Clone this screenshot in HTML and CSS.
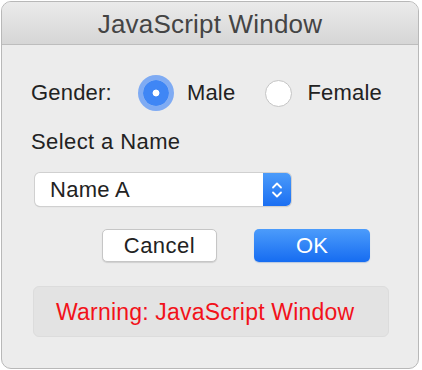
FILE: index.html
```html
<!DOCTYPE html>
<html lang="en">
<head>
    <meta charset="UTF-8">
    <meta name="viewport" content="width=device-width, initial-scale=1.0">
    <title>JavaScript Window</title>
    <link rel="stylesheet" href="styles.css">
</head>
<body>
    <div class="window">
        <div class="titlebar">JavaScript Window</div>

        <div class="content">
            <div class="gender-row">
                <span class="label">Gender:</span>
                <label class="radio-option">
                    <span class="radio checked"></span>
                    <span>Male</span>
                </label>
                <label class="radio-option">
                    <span class="radio"></span>
                    <span>Female</span>
                </label>
            </div>

            <div class="label select-label">Select a Name</div>

            <div class="select">
                <span class="select-value">Name A</span>
                <span class="select-arrows">
                    <svg width="12" height="20" viewBox="0 0 12 20">
                        <path d="M2 7.5 L6 3.5 L10 7.5" fill="none" stroke="#fff" stroke-width="1.8" stroke-linecap="round" stroke-linejoin="round"/>
                        <path d="M2 12.5 L6 16.5 L10 12.5" fill="none" stroke="#fff" stroke-width="1.8" stroke-linecap="round" stroke-linejoin="round"/>
                    </svg>
                </span>
            </div>

            <div class="buttons">
                <button class="btn btn-cancel">Cancel</button>
                <button class="btn btn-ok">OK</button>
            </div>

            <div class="warning">Warning: JavaScript Window</div>
        </div>
    </div>
</body>
</html>
```

FILE: styles.css
```css
html, body {
    margin: 0;
    background: #ffffff;
}
body {
    padding: 1px;
    font-family: "Liberation Sans", Arial, sans-serif;
    color: #222;
}
.window {
    width: 416px;
    height: 366px;
    border: 1px solid #b8b8b8;
    border-radius: 10px;
    background: #ececec;
    overflow: hidden;
}
.titlebar {
    height: 42px;
    line-height: 44px;
    text-align: center;
    font-size: 26px;
    letter-spacing: 0.2px;
    color: #444;
    background: linear-gradient(#ebebeb, #d6d6d6);
    border-bottom: 1px solid #bdbdbd;
}
.content {
    padding: 30px 0 0 29px;
}
.label {
    font-size: 22px;
    line-height: 26px;
    letter-spacing: 0.2px;
}
.gender-row {
    display: flex;
    align-items: center;
    height: 36px;
    font-size: 22px;
    letter-spacing: 0.2px;
}
.radio-option {
    display: flex;
    align-items: center;
    gap: 15px;
}
.radio-option:first-of-type {
    margin-left: 31px;
    margin-right: 30px;
}
.radio {
    box-sizing: border-box;
    width: 27px;
    height: 27px;
    border-radius: 50%;
    background: #fff;
    border: 1px solid #c4c4c4;
}
.radio.checked {
    width: 26px;
    height: 26px;
    border: none;
    background: radial-gradient(circle, #fff 0, #fff 3px, #3f86f5 3.8px);
    box-shadow: 0 0 0 5px #7fabf3;
    margin-right: 3px;
}
.select-label {
    margin-top: 18px;
    letter-spacing: 0.4px;
}
.select {
    display: flex;
    width: 256px;
    height: 33px;
    margin-top: 18px;
    margin-left: 4px;
    background: #fff;
    border-radius: 5px;
    box-shadow: 0 0 0 1px #d0d0d0, 0 1px 1px #bcbcbc;
    overflow: hidden;
}
.select-value {
    flex: 1;
    padding-left: 15px;
    font-size: 22px;
    line-height: 33px;
    letter-spacing: 0.3px;
}
.select-arrows {
    width: 28px;
    display: flex;
    align-items: center;
    justify-content: center;
    background: linear-gradient(#4b9bfa, #1b6ff2);
}
.buttons {
    display: flex;
    gap: 37px;
    margin-top: 23px;
    margin-left: 71px;
}
.btn {
    width: 115px;
    height: 33px;
    border-radius: 5px;
    font-family: "Liberation Sans", Arial, sans-serif;
    font-size: 22px;
    padding: 0;
}
.btn-cancel {
    background: #fff;
    color: #222;
    border: 1px solid #c6c6c6;
    box-shadow: 0 1px 1px #d0d0d0;
    letter-spacing: 0.5px;
}
.btn-ok {
    width: 116px;
    background: linear-gradient(#4c9cfb, #166cf1);
    color: #fff;
    border: none;
    box-shadow: 0 1px 1px #b8c8e0;
}
.warning {
    box-sizing: border-box;
    width: 356px;
    height: 51px;
    margin-top: 24px;
    margin-left: 2px;
    padding-left: 22px;
    line-height: 50px;
    font-size: 23px;
    letter-spacing: 0.2px;
    color: #f2121a;
    background: #e3e3e3;
    border: 1px solid #dcdcdc;
    border-radius: 6px;
}
```
